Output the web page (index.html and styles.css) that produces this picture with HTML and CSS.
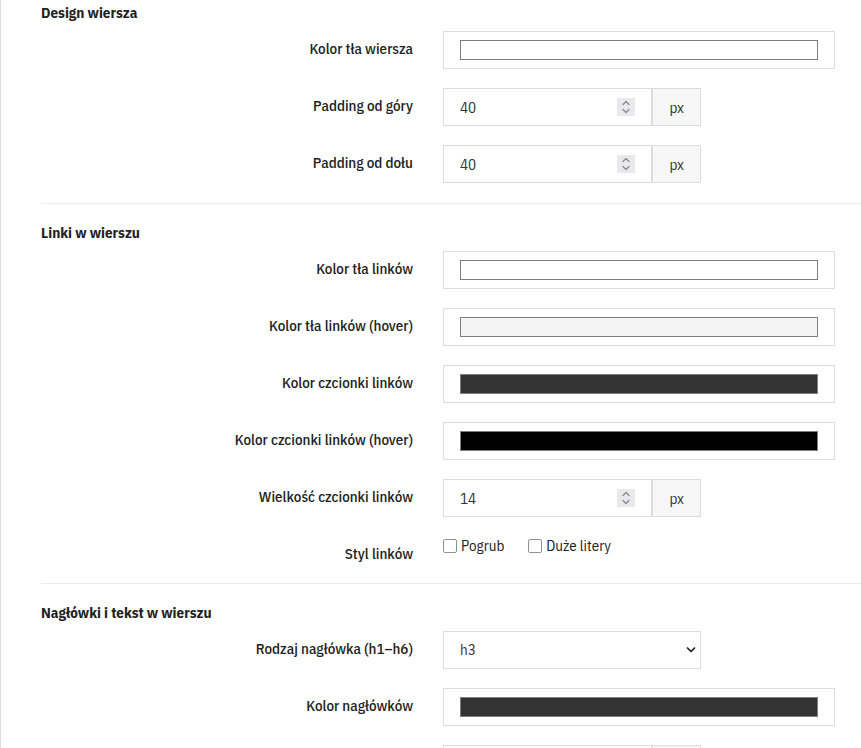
FILE: index.html
```html
<!DOCTYPE html>
<html lang="pl">

<head>
  <meta charset="UTF-8" />
  <meta name="viewport" content="width=device-width, initial-scale=1.0" />
  <title>Ustawienia wiersza</title>
  <link rel="stylesheet" href="styles.css">
</head>

<body>

  <form class="panel">
    <section class="section">
      <h2 class="section-title">Design wiersza</h2>
      <div class="row">
        <label class="row-label" for="row-bg">Kolor tła wiersza</label>
        <input class="control color" type="color" id="row-bg" value="#ffffff" />
      </div>
      <div class="row">
        <label class="row-label" for="padding-top">Padding od góry</label>
        <div class="group">
          <input class="control number" type="number" id="padding-top" value="40" />
          <span class="addon">px</span>
        </div>
      </div>
      <div class="row">
        <label class="row-label" for="padding-bottom">Padding od dołu</label>
        <div class="group">
          <input class="control number" type="number" id="padding-bottom" value="40" />
          <span class="addon">px</span>
        </div>
      </div>
    </section>

    <section class="section">
      <h2 class="section-title">Linki w wierszu</h2>
      <div class="row">
        <label class="row-label" for="link-bg">Kolor tła linków</label>
        <input class="control color" type="color" id="link-bg" value="#ffffff" />
      </div>
      <div class="row">
        <label class="row-label" for="link-bg-hover">Kolor tła linków (hover)</label>
        <input class="control color" type="color" id="link-bg-hover" value="#f4f4f4" />
      </div>
      <div class="row">
        <label class="row-label" for="link-color">Kolor czcionki linków</label>
        <input class="control color" type="color" id="link-color" value="#333333" />
      </div>
      <div class="row">
        <label class="row-label" for="link-color-hover">Kolor czcionki linków (hover)</label>
        <input class="control color" type="color" id="link-color-hover" value="#000000" />
      </div>
      <div class="row">
        <label class="row-label" for="link-size">Wielkość czcionki linków</label>
        <div class="group">
          <input class="control number" type="number" id="link-size" value="14" />
          <span class="addon">px</span>
        </div>
      </div>
      <div class="row" role="group" aria-labelledby="link-style">
        <span class="row-label" id="link-style">Styl linków</span>
        <div class="checks">
          <label class="check"><input type="checkbox" name="bold" />Pogrub</label>
          <label class="check"><input type="checkbox" name="uppercase" />Duże litery</label>
        </div>
      </div>
    </section>

    <section class="section">
      <h2 class="section-title">Nagłówki i tekst w wierszu</h2>
      <div class="row">
        <label class="row-label" for="heading-type">Rodzaj nagłówka (h1–h6)</label>
        <select class="control select" id="heading-type">
          <option>h1</option>
          <option>h2</option>
          <option selected>h3</option>
          <option>h4</option>
          <option>h5</option>
          <option>h6</option>
        </select>
      </div>
      <div class="row">
        <label class="row-label" for="heading-color">Kolor nagłówków</label>
        <input class="control color" type="color" id="heading-color" value="#333333" />
      </div>
      <div class="row">
        <label class="row-label" for="heading-size">Wielkość nagłówków</label>
        <div class="group">
          <input class="control number" type="number" id="heading-size" />
          <span class="addon">px</span>
        </div>
      </div>
    </section>
  </form>

</body>

</html>
```
FILE: styles.css
```css
* {
  box-sizing: border-box;
}

body {
  margin: 0;
  height: 100vh;
  overflow: hidden;
  background-color: #fff;
  color: #212121;
  font-family: "IBM Plex Sans Condensed", Roboto, sans-serif;
  font-size: 15px;
  line-height: 20px;
}

.panel {
  min-height: 100vh;
  padding: 3px 0 0 40px;
  border-left: 1px solid #dcdcdc;
}

.section {
  display: flex;
  flex-direction: column;
  gap: 19px;
  padding-bottom: 20px;
}

.section + .section {
  padding-top: 19px;
  border-top: 1px solid #ebebeb;
}

.section-title {
  margin: 0 0 -11px;
  font-size: 15px;
  font-weight: 700;
}

.row {
  display: grid;
  grid-template-columns: 93fr 98fr;
  column-gap: 30px;
  align-items: start;
  padding-right: 26px;
}

.row-label {
  padding-top: 9px;
  line-height: 18px;
  font-weight: 500;
  text-align: right;
}

.control {
  width: 100%;
  height: 38px;
  margin: 0;
  padding: 0 16px;
  border: 1px solid #dcdcdc;
  border-radius: 0;
  background-color: #fff;
  color: #333;
  font-family: inherit;
  font-size: 15px;
}

.color {
  appearance: none;
  padding: 8px 16px;
}

.color::-webkit-color-swatch-wrapper {
  padding: 0;
}

.color::-webkit-color-swatch {
  border: 1px solid #7f7f7f;
  border-radius: 0;
}

.group {
  display: flex;
  max-width: 258px;
}

.number {
  flex: 1;
  min-width: 0;
}

.number::-webkit-inner-spin-button {
  appearance: none;
  width: 18px;
  height: 18px;
  opacity: 1;
  background: #e9e9ed url("data:image/svg+xml,%3Csvg xmlns='http://www.w3.org/2000/svg' width='18' height='18' fill='none' stroke='%238f8f9d' stroke-width='1.5' stroke-linecap='round' stroke-linejoin='round'%3E%3Cpath d='M6 6.5l3-3 3 3M6 11.5l3 3 3-3'/%3E%3C/svg%3E");
}

.addon {
  padding: 9px 16px 7px;
  border: 1px solid #dcdcdc;
  background-color: #f7f7f7;
  color: #333;
}

.select {
  appearance: none;
  max-width: 258px;
  padding-bottom: 2px;
  background: #fff url("data:image/svg+xml,%3Csvg xmlns='http://www.w3.org/2000/svg' width='10' height='6' fill='none' stroke='%23222' stroke-width='1.7' stroke-linecap='round' stroke-linejoin='round'%3E%3Cpath d='M1.5 1L5 4.5 8.5 1'/%3E%3C/svg%3E") no-repeat right 4px center;
}

.checks {
  display: flex;
  gap: 24px;
}

.check {
  display: flex;
  align-items: center;
  gap: 4px;
}

.check input {
  appearance: none;
  width: 14px;
  height: 14px;
  margin: 0;
  border: 1px solid #8f8f9d;
  border-radius: 2px;
  background-color: #fff;
}

.check input:checked {
  background-color: #333;
}
```
